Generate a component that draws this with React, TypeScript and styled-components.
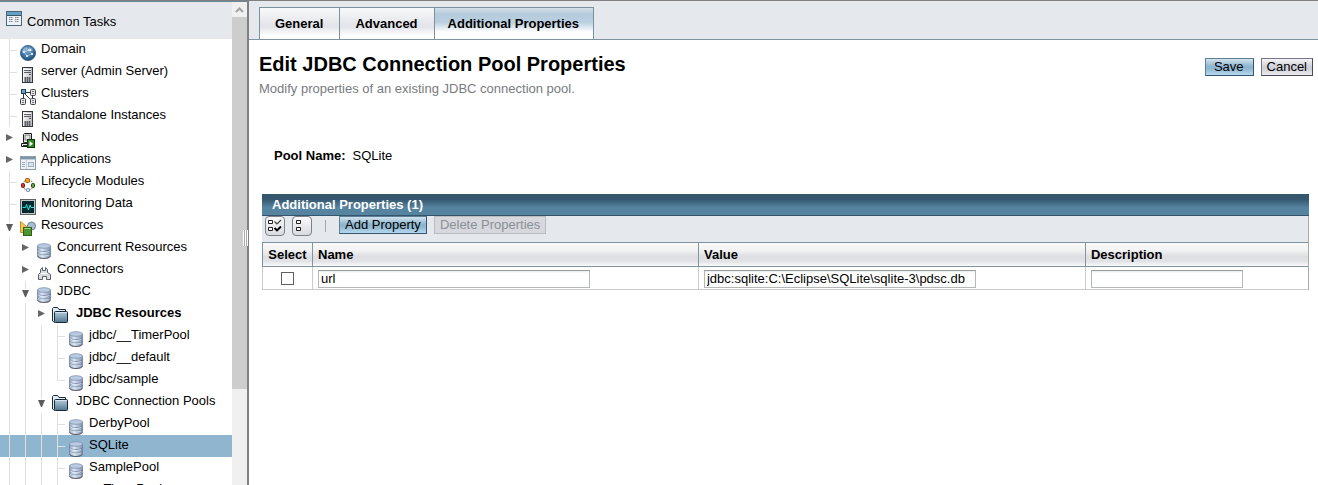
import React from "react";
import styled, { createGlobalStyle, css } from "styled-components";

const GlobalStyle = createGlobalStyle`
  *, *::before, *::after { box-sizing: border-box; }
  body {
    margin: 0;
    background: #fff;
    color: #000;
    font-family: "Liberation Sans", Arial, Helvetica, sans-serif;
    font-size: 13px;
  }
  button, input { font: inherit; color: inherit; margin: 0; }
`;

/* ---------- Frames ---------- */

const Frames = styled.div`
  display: flex;
  height: 100vh;
  overflow: hidden;
  border-top: 1px solid #808080;
`;

const Sidebar = styled.aside`
  display: flex;
  flex: none;
  width: 247px;
  border-top: 1px solid #6b8797;
`;

const TreePane = styled.nav`
  flex: 1;
  min-width: 0;
  overflow: hidden;
`;

const Divider = styled.div`
  position: relative;
  flex: none;
  width: 2px;
  background: #808080;
`;

const Grip = styled.span`
  position: absolute;
  top: 229px;
  right: 1px;
  width: 5px;
  height: 16px;
  background: repeating-linear-gradient(90deg, #fff 0 1px, #a8a8a8 1px 2px);
`;

const Main = styled.main`
  flex: 1;
  min-width: 0;
`;

/* ---------- Scrollbar ---------- */

const ScrollTrack = styled.div`
  display: flex;
  flex-direction: column;
  flex: none;
  width: 15px;
  background: #f0f0f0;
`;

const ScrollArrow = styled.span`
  display: flex;
  align-items: center;
  justify-content: center;
  flex: none;
  height: 15px;
`;

const ScrollThumb = styled.span`
  flex: none;
  height: 77%;
  background: #cdcdcd;
`;

/* ---------- Tree ---------- */

const TreeHeader = styled.a`
  display: flex;
  align-items: center;
  gap: 5px;
  height: 37px;
  padding: 2px 0 0 6px;
  background: #e5e9ed;
  color: #000;
  text-decoration: none;

  svg { margin-bottom: 6px; }
`;

const TreeList = styled.ul`
  list-style: none;
  margin: 0;
  padding: 0;
`;

const TreeRow = styled.li<{ $selected?: boolean }>`
  display: flex;
  height: 22px;
  padding-left: 1px;
  background: ${(p) => (p.$selected ? "#8fb5cf" : "transparent")};
`;

type GuideKind = "line" | "tee" | "last" | "closed" | "open";

const vertical = "linear-gradient(#e0e0e0, #e0e0e0) 8px 0";
const horizontal = "linear-gradient(#e0e0e0, #e0e0e0) 8px 11px / 9px 1px no-repeat";

const guideStyles: Record<GuideKind, ReturnType<typeof css>> = {
  line: css`background: ${vertical} / 1px 22px no-repeat;`,
  tee: css`background: ${vertical} / 1px 22px no-repeat, ${horizontal};`,
  last: css`background: ${vertical} / 1px 12px no-repeat, ${horizontal};`,
  closed: css``,
  open: css`background: ${vertical} / 1px 8px no-repeat;`,
};

const Guide = styled.span<{ $kind: GuideKind }>`
  flex: none;
  width: 16px;
  height: 22px;
  ${(p) => guideStyles[p.$kind]}

  svg { display: block; }
`;

const TreeIcon = styled.span<{ $raised?: boolean }>`
  flex: none;
  width: 16px;
  height: 16px;
  margin-left: 3px;
  margin-top: ${(p) => (p.$raised ? 4 : 6)}px;

  svg { display: block; }
`;

const TreeLink = styled.a<{ $bold?: boolean; $wide?: boolean }>`
  margin-left: ${(p) => (p.$wide ? 8 : 5)}px;
  line-height: 20px;
  font-weight: ${(p) => (p.$bold ? 700 : 400)};
  color: #000;
  text-decoration: none;
  white-space: nowrap;
`;

/* ---------- Tabs and heading ---------- */

const TabBar = styled.div`
  display: flex;
  align-items: flex-end;
  height: 39px;
  padding-left: 10px;
  background: #e5e8ec;
  border-bottom: 1px solid #7f949e;
`;

const Tab = styled.button<{ $active?: boolean }>`
  height: 32px;
  padding: ${(p) => (p.$active ? "0 14px 0 13px" : "0 16px 0 15px")};
  border: 1px solid #7b929c;
  border-bottom: 0;
  background: ${(p) =>
    p.$active
      ? "linear-gradient(#d3e0ea 0, #b5cbdb 20%, #b9cede 45%, #fff 78%)"
      : "linear-gradient(#f8f9fa 0, #e3e5ea 55%, #e3e5ea 62%, #fff 90%)"};
  font-weight: 700;
  white-space: nowrap;

  & + & { border-left: 0; }
`;

const TitleRow = styled.div`
  display: flex;
  justify-content: space-between;
  align-items: flex-start;
  padding: 12px 5px 0 10px;
`;

const Title = styled.h1`
  margin: 0;
  font-size: 20px;
  line-height: 24px;
  font-weight: 700;
`;

const Subtitle = styled.p`
  margin: 5px 0 0;
  line-height: 16px;
  color: #777b80;
`;

const PageActions = styled.div`
  display: flex;
  gap: 7px;
  margin-top: 6px;
`;

type ButtonTone = "primary" | "secondary" | "disabled";

const tones: Record<ButtonTone, ReturnType<typeof css>> = {
  primary: css`
    border-color: #5f7f94 #35566e #35566e #5f7f94;
    background: linear-gradient(#d2e3ee 0, #8fb6cf 45%, #8fb6cf 60%, #b5d8ee 100%);
  `,
  secondary: css`
    border-color: #77778a #4a4a5c #4a4a5c #77778a;
    background: linear-gradient(#f4f4f6 0, #cfcfd8 50%, #d2d2da 65%, #ececf0 100%);
  `,
  disabled: css`
    border-color: #b9bcc1;
    background: #d6d8dd;
    color: #8b8f96;
  `,
};

const Button = styled.button<{ $tone: ButtonTone }>`
  height: 18px;
  padding: 0 5px;
  border: 1px solid;
  line-height: 16px;
  white-space: nowrap;
  ${(p) => tones[p.$tone]}
`;

const SaveButton = styled(Button)`
  padding: 0 9px 0 8px;
`;

const PoolName = styled.dl`
  display: flex;
  gap: 7px;
  margin: 51px 0 0 25px;
  line-height: 16px;

  dt { font-weight: 700; }
  dd { margin: 0; }
`;

/* ---------- Property table ---------- */

const Panel = styled.section`
  margin: 30px 9px 0 13px;
  border-right: 1px solid #a4abae;
`;

const PanelTitle = styled.h2`
  margin: 0 -1px 0 0;
  height: 22px;
  padding-left: 10px;
  border-bottom: 1px solid #33566e;
  background: linear-gradient(#33566c 0, #35586e 25%, #5683a0 65%, #5683a0 100%);
  color: #fff;
  font-size: 13px;
  line-height: 22px;
  font-weight: 700;
`;

const Toolbar = styled.div`
  display: flex;
  align-items: flex-start;
  gap: 7px;
  height: 26px;
  padding-left: 3px;
  background: #e5e8ec;
`;

const IconButton = styled.button`
  display: flex;
  align-items: center;
  justify-content: center;
  width: 20px;
  height: 20px;
  padding: 0;
  border: 1px solid #7c8288;
  border-radius: 4px;
  background: linear-gradient(#fafafb, #d9dbe0);
`;

const Separator = styled.span`
  width: 1px;
  height: 12px;
  margin: 4px 6px 0;
  background: #a3a8ad;
`;

const Table = styled.table`
  width: 100%;
  table-layout: fixed;
  border-collapse: separate;
  border-spacing: 0;
`;

const HeadCell = styled.th<{ $center?: boolean }>`
  height: 25px;
  padding: ${(p) => (p.$center ? "0" : "0 5px")};
  border: solid #7f949e;
  border-width: 1px 0 1px 1px;
  background: linear-gradient(#fafafa 0, #f3f3f4 30%, #dddee2 60%, #e2e3e7 80%, #fafafa 100%);
  line-height: 16px;
  text-align: ${(p) => (p.$center ? "center" : "left")};
  font-weight: 700;
`;

const BodyCell = styled.td<{ $center?: boolean }>`
  height: 23px;
  padding: ${(p) => (p.$center ? "0" : "1px 5px 0")};
  border: solid #c8cccd;
  border-width: 0 0 1px 1px;
  vertical-align: middle;

  input { display: block; }
`;

const Col = styled.col<{ $width: string }>`
  width: ${(p) => p.$width};
`;

const TextInput = styled.input<{ $short?: boolean }>`
  width: ${(p) => (p.$short ? 152 : 272)}px;
  height: 18px;
  max-width: 100%;
  padding: 0 2px;
  border: 1px solid #b4b8b8;
  border-top-color: #999d9d;
  border-radius: 0;
  background: linear-gradient(#e9ebeb 0, #fff 2px);
  outline: 0;
`;

const Checkbox = styled.input`
  appearance: none;
  width: 13px;
  height: 13px;
  margin: 0 auto;
  border: 1px solid #5f5f5f;
  background: #fff;

  &:checked { background: #5683a0; }
`;

/* ---------- Icons ---------- */

const Svg = ({ children, size = 16 }: { children: React.ReactNode; size?: number }) => (
  <svg width={size} height={size} viewBox={`0 0 ${size} ${size}`} aria-hidden="true">
    {children}
  </svg>
);

const Definitions = styled.svg`
  display: block;
`;

const Gradients = () => (
  <Definitions width="0" height="0" aria-hidden="true">
    <defs>
      <linearGradient id="disk" x1="0" x2="1">
        <stop offset="0" stopColor="#8ba1c4" />
        <stop offset="0.35" stopColor="#dfe7f3" />
        <stop offset="1" stopColor="#7d91b3" />
      </linearGradient>
      <linearGradient id="folder" x1="0" y1="0" x2="0" y2="1">
        <stop offset="0" stopColor="#b5cddd" />
        <stop offset="1" stopColor="#54768e" />
      </linearGradient>
      <radialGradient id="globe" cx="0.45" cy="0.35" r="0.65">
        <stop offset="0" stopColor="#7fabd0" />
        <stop offset="0.6" stopColor="#3f73a3" />
        <stop offset="1" stopColor="#1f4a74" />
      </radialGradient>
      <linearGradient id="steel" x1="0" x2="1">
        <stop offset="0" stopColor="#fbfbfb" />
        <stop offset="1" stopColor="#b5b8bc" />
      </linearGradient>
    </defs>
  </Definitions>
);

const TasksIcon = () => (
  <Svg>
    <rect x="0.5" y="0.5" width="15" height="14" fill="#eef2f5" stroke="#48687c" />
    <rect x="1" y="1" width="14" height="3" fill="#6aa0c3" />
    <path d="M1 4.5h14" stroke="#36566c" />
    <path d="M3 6.5h4M9 6.5h4M3 8.5h4M9 8.5h4M3 10.5h4M9 10.5h4" stroke="#7b868d" strokeDasharray="1.5 0.5" />
  </Svg>
);

const GlobeIcon = () => (
  <Svg>
    <circle cx="8" cy="8" r="7.6" fill="url(#globe)" stroke="#345d84" strokeWidth="0.8" />
    <path d="M2 6l2-3 3-1 1 2-2 1-1 3-2 0zM9 2l3 1.500 1 2.500-3 0-1-2z" fill="#a9c9e2" opacity="0.6" />
    <path d="M4 7l5-2 3 4M4 7l3 4 5-2" fill="none" stroke="#d9e8f4" strokeWidth="0.5" />
    <rect x="3" y="6" width="2" height="2" fill="#dcebf6" />
    <rect x="8" y="4" width="3" height="2" fill="#dcebf6" />
    <rect x="11" y="8" width="2" height="2" fill="#dcebf6" />
    <rect x="6" y="10" width="2" height="2" fill="#dcebf6" />
  </Svg>
);

const ServerIcon = () => (
  <Svg>
    <rect x="2.5" y="0.5" width="10" height="15" fill="url(#steel)" stroke="#33373b" />
    <path d="M4 2.5h7" stroke="#fff" />
    <path d="M4 3.5h7M4 5.5h7" stroke="#5b6066" />
    <rect x="9" y="7" width="2" height="1" fill="#52585e" />
    <rect x="4" y="10" width="7" height="5" fill="#9da1a6" />
    <path d="M5.5 10v5M7.5 10v5M9.5 10v5" stroke="#5a5f65" />
  </Svg>
);

const ClusterIcon = () => (
  <Svg>
    <path d="M5 3.5h6M3.5 5v5M5 5l6 6M12.5 6v4" stroke="#333" fill="none" />
    <rect x="1.5" y="0.5" width="4" height="4" fill="#5ba3d3" stroke="#23415a" />
    <rect x="10.5" y="0.5" width="5" height="6" rx="1" fill="#e3e6e9" stroke="#444" />
    <rect x="0.5" y="9.5" width="5" height="6" rx="1" fill="#e3e6e9" stroke="#444" />
    <rect x="10.5" y="9.5" width="5" height="6" rx="1" fill="#e3e6e9" stroke="#444" />
    <path d="M12 2.5h2M12 4.5h2M2 11.5h2M2 13.5h2M12 11.5h2M12 13.5h2" stroke="#777" />
  </Svg>
);

const NodeIcon = () => (
  <Svg>
    <path d="M3.5 1.500L4.500 0.500H11.500V8.500L10.500 9.500H3.500z" fill="#f4f4f4" stroke="#1b1b1b" />
    <rect x="5" y="2" width="5" height="5" fill="#dfe4e8" stroke="#555" strokeWidth="0.7" />
    <path d="M1.500 10.500h9v3h-9z" fill="#e9e9e9" stroke="#1b1b1b" />
    <path d="M3 12.500h5M4 9.500h5" stroke="#333" />
    <rect x="7.500" y="6.500" width="7" height="8" fill="#2f8424" stroke="#12370d" />
    <path d="M9.500 8v5.500l3.500-2.700z" fill="#fff" />
  </Svg>
);

const AppIcon = () => (
  <Svg>
    <rect x="0.5" y="1.5" width="15" height="13" fill="#eef2f5" stroke="#8f9ba5" />
    <rect x="1" y="2" width="14" height="2" fill="#7f97a8" />
    <path d="M1 4.500h14" stroke="#bccbd6" />
    <path d="M2 7.500h3M2 9.500h3M2 11.500h3" stroke="#93afc4" />
    <path d="M6.500 5v9" stroke="#c3cfd8" />
    <rect x="8.500" y="7.500" width="5" height="4" fill="#dae4ec" stroke="#9db3c2" />
  </Svg>
);

const LifecycleIcon = () => (
  <Svg>
    <circle cx="8" cy="8" r="5.200" fill="none" stroke="#444" strokeDasharray="1.500 1.200" />
    <rect x="5.500" y="1.500" width="4" height="4" rx="1" fill="#f2a32c" stroke="#9a5a08" />
    <rect x="1.500" y="6.500" width="3" height="4" rx="1" fill="#d8302b" stroke="#7d1010" />
    <rect x="11.500" y="6.500" width="3" height="4" rx="1" fill="#57a63c" stroke="#1a4c10" />
    <rect x="6.500" y="11.500" width="3" height="3" rx="1" fill="#d7e7f3" stroke="#5f86a2" />
  </Svg>
);

const MonitorIcon = () => (
  <Svg>
    <rect x="0.5" y="0.5" width="15" height="15" fill="#c4c8c8" stroke="#5d6363" />
    <rect x="2" y="2" width="12" height="12" fill="#022a2e" />
    <path d="M2.5 8.5h3l1-3 2 5.5 1.5-5 1 2.500h3" fill="none" stroke="#22e3dd" />
  </Svg>
);

const ResourcesIcon = () => (
  <Svg>
    <circle cx="11.500" cy="5" r="4" fill="#a9bdd1" stroke="#6b8299" />
    <path d="M0.500 0.500L6.500 5.500L3.500 11.500H0.500z" fill="#f8c650" stroke="#c98b23" />
    <rect x="3.500" y="6.500" width="8" height="8" fill="#4f9430" stroke="#2b6415" />
    <path d="M4.500 7.500h6" stroke="#9fd17e" />
  </Svg>
);

const DiskIcon = () => (
  <Svg>
    <path d="M1.500 3v10c0 1.500 3 2.500 6.500 2.500s6.500-1 6.500-2.500V3z" fill="url(#disk)" stroke="#7686a0" strokeWidth="0.800" />
    <path d="M1.700 13.300c.5 1.300 3 2.200 6.300 2.200s5.800-.9 6.300-2.200" fill="none" stroke="#4e4e55" strokeWidth="0.800" />
    <ellipse cx="8" cy="3" rx="6.500" ry="2.300" fill="#b9cae2" stroke="#8292ac" strokeWidth="0.800" />
    <path d="M1.500 6.300c0 1.500 3 2.300 6.500 2.300s6.500-.8 6.500-2.300M1.500 9.800c0 1.500 3 2.300 6.500 2.300s6.500-.8 6.500-2.300" fill="none" stroke="#63779a" strokeWidth="0.900" />
    <path d="M2 7.400c1 1.300 3.500 1.900 6 1.900s4-.3 5-1M2 10.900c1 1.300 3.500 1.900 6 1.900s4-.3 5-1" fill="none" stroke="#eef3f9" strokeWidth="0.700" />
  </Svg>
);

const ConnectorIcon = () => (
  <Svg>
    <path
      d="M2.500 14.500V9.500L4.500 7.500V4.500L6.500 2.500V5.500H9.500V2.500L11.500 4.500V7.500L14.500 9.500V14.500H10.500V11.500H6.500V14.500z"
      fill="#d8dbdf"
      stroke="#5a5f65"
    />
    <path d="M5 8.500h6" stroke="#fff" />
  </Svg>
);

const FolderIcon = () => (
  <Svg>
    <path d="M0.500 14V1.500L1.500 0.500H5.500L7 2.500H13.500V5" fill="#e3edf4" stroke="#14293a" />
    <path d="M0.500 14L2.500 15.500" stroke="#14293a" />
    <rect x="2.500" y="4.500" width="13" height="11" rx="1" fill="url(#folder)" stroke="#14293a" />
    <path d="M3.500 5.500h11" stroke="#d5e4ee" />
  </Svg>
);

const ClosedArrow = () => (
  <svg width="16" height="22" aria-hidden="true">
    <path d="M5 7v7l7-3.500z" fill="#666" />
  </svg>
);

const OpenArrow = () => (
  <svg width="16" height="22" aria-hidden="true">
    <path d="M5 9h7l-3 7h-1z" fill="#5c5c5c" />
  </svg>
);

const CheckAllIcon = () => (
  <Svg>
    <path d="M1.500 2.500h4v3h-4zM1.500 9.500h4v3h-4z" fill="#fff" stroke="#222" />
    <path d="M7.500 3.500l2.500 2.500 4-4" fill="none" stroke="#444" strokeWidth="1.200" />
    <path d="M7.500 10l2.500 2.500 4-4" fill="none" stroke="#000" strokeWidth="1.900" />
  </Svg>
);

const UncheckAllIcon = () => (
  <Svg>
    <path d="M2.500 2.500h4v3h-4zM2.500 9.500h4v3h-4z" fill="#fff" stroke="#222" />
  </Svg>
);

/* ---------- Data ---------- */

const icons = {
  globe: GlobeIcon,
  server: ServerIcon,
  cluster: ClusterIcon,
  node: NodeIcon,
  app: AppIcon,
  lifecycle: LifecycleIcon,
  monitor: MonitorIcon,
  resources: ResourcesIcon,
  disk: DiskIcon,
  connector: ConnectorIcon,
  folder: FolderIcon,
};

interface TreeNode {
  label: string;
  icon: keyof typeof icons;
  guides: GuideKind[];
  bold?: boolean;
  selected?: boolean;
}

const deep = (last: GuideKind): GuideKind[] => ["line", "line", "line", last];

const nodes: TreeNode[] = [
  { label: "Domain", icon: "globe", guides: ["tee"] },
  { label: "server (Admin Server)", icon: "server", guides: ["tee"] },
  { label: "Clusters", icon: "cluster", guides: ["tee"] },
  { label: "Standalone Instances", icon: "server", guides: ["tee"] },
  { label: "Nodes", icon: "node", guides: ["closed"] },
  { label: "Applications", icon: "app", guides: ["closed"] },
  { label: "Lifecycle Modules", icon: "lifecycle", guides: ["tee"] },
  { label: "Monitoring Data", icon: "monitor", guides: ["tee"] },
  { label: "Resources", icon: "resources", guides: ["open"] },
  { label: "Concurrent Resources", icon: "disk", guides: ["line", "closed"] },
  { label: "Connectors", icon: "connector", guides: ["line", "closed"] },
  { label: "JDBC", icon: "disk", guides: ["line", "open"] },
  { label: "JDBC Resources", icon: "folder", guides: ["line", "line", "closed"], bold: true },
  { label: "jdbc/__TimerPool", icon: "disk", guides: deep("tee") },
  { label: "jdbc/__default", icon: "disk", guides: deep("tee") },
  { label: "jdbc/sample", icon: "disk", guides: deep("last") },
  { label: "JDBC Connection Pools", icon: "folder", guides: ["line", "line", "open"] },
  { label: "DerbyPool", icon: "disk", guides: deep("tee") },
  { label: "SQLite", icon: "disk", guides: deep("tee"), selected: true },
  { label: "SamplePool", icon: "disk", guides: deep("tee") },
  { label: "__TimerPool", icon: "disk", guides: deep("last") },
];

const TreeItem = ({ node }: { node: TreeNode }) => {
  const Icon = icons[node.icon];
  const isFolder = node.icon === "folder";
  return (
    <TreeRow $selected={node.selected}>
      {node.guides.map((kind, i) => (
        <Guide key={i} $kind={kind}>
          {kind === "closed" && <ClosedArrow />}
          {kind === "open" && <OpenArrow />}
        </Guide>
      ))}
      <TreeIcon $raised={isFolder}>
        <Icon />
      </TreeIcon>
      <TreeLink href="#" $bold={node.bold} $wide={isFolder}>
        {node.label}
      </TreeLink>
    </TreeRow>
  );
};

export default function App() {
  return (
    <>
      <GlobalStyle />
      <Gradients />
      <Frames>
        <Sidebar>
          <TreePane aria-label="Common Tasks">
            <TreeHeader href="#">
              <TasksIcon />
              Common Tasks
            </TreeHeader>
            <TreeList>
              {nodes.map((node) => (
                <TreeItem key={node.label} node={node} />
              ))}
            </TreeList>
          </TreePane>
          <ScrollTrack aria-hidden="true">
            <ScrollArrow>
              <svg width="9" height="6">
                <path d="M1 5l3.500-3.500L8 5" fill="none" stroke="#a3a3a3" strokeWidth="2" />
              </svg>
            </ScrollArrow>
            <ScrollThumb />
          </ScrollTrack>
        </Sidebar>
        <Divider>
          <Grip />
        </Divider>
        <Main>
          <TabBar role="tablist">
            <Tab role="tab" type="button">General</Tab>
            <Tab role="tab" type="button">Advanced</Tab>
            <Tab role="tab" type="button" aria-selected="true" $active>Additional Properties</Tab>
          </TabBar>
          <TitleRow>
            <div>
              <Title>Edit JDBC Connection Pool Properties</Title>
              <Subtitle>Modify properties of an existing JDBC connection pool.</Subtitle>
            </div>
            <PageActions>
              <SaveButton type="button" $tone="primary">Save</SaveButton>
              <Button type="button" $tone="secondary">Cancel</Button>
            </PageActions>
          </TitleRow>
          <PoolName>
            <dt>Pool Name:</dt>
            <dd>SQLite</dd>
          </PoolName>
          <Panel>
            <PanelTitle>Additional Properties (1)</PanelTitle>
            <Toolbar>
              <IconButton type="button" aria-label="Select all"><CheckAllIcon /></IconButton>
              <IconButton type="button" aria-label="Deselect all"><UncheckAllIcon /></IconButton>
              <Separator />
              <Button type="button" $tone="primary">Add Property</Button>
              <Button type="button" $tone="disabled" disabled>Delete Properties</Button>
            </Toolbar>
            <Table>
              <colgroup>
                <Col $width="50px" />
                <Col $width="36.9%" />
                <Col $width="37%" />
                <Col $width="auto" />
              </colgroup>
              <thead>
                <tr>
                  <HeadCell scope="col" $center>Select</HeadCell>
                  <HeadCell scope="col">Name</HeadCell>
                  <HeadCell scope="col">Value</HeadCell>
                  <HeadCell scope="col">Description</HeadCell>
                </tr>
              </thead>
              <tbody>
                <tr>
                  <BodyCell $center><Checkbox type="checkbox" aria-label="Select url" /></BodyCell>
                  <BodyCell><TextInput type="text" aria-label="Name" defaultValue="url" /></BodyCell>
                  <BodyCell><TextInput type="text" aria-label="Value" defaultValue="jdbc:sqlite:C:\Eclipse\SQLite\sqlite-3\pdsc.db" /></BodyCell>
                  <BodyCell><TextInput type="text" aria-label="Description" $short /></BodyCell>
                </tr>
              </tbody>
            </Table>
          </Panel>
        </Main>
      </Frames>
    </>
  );
}
